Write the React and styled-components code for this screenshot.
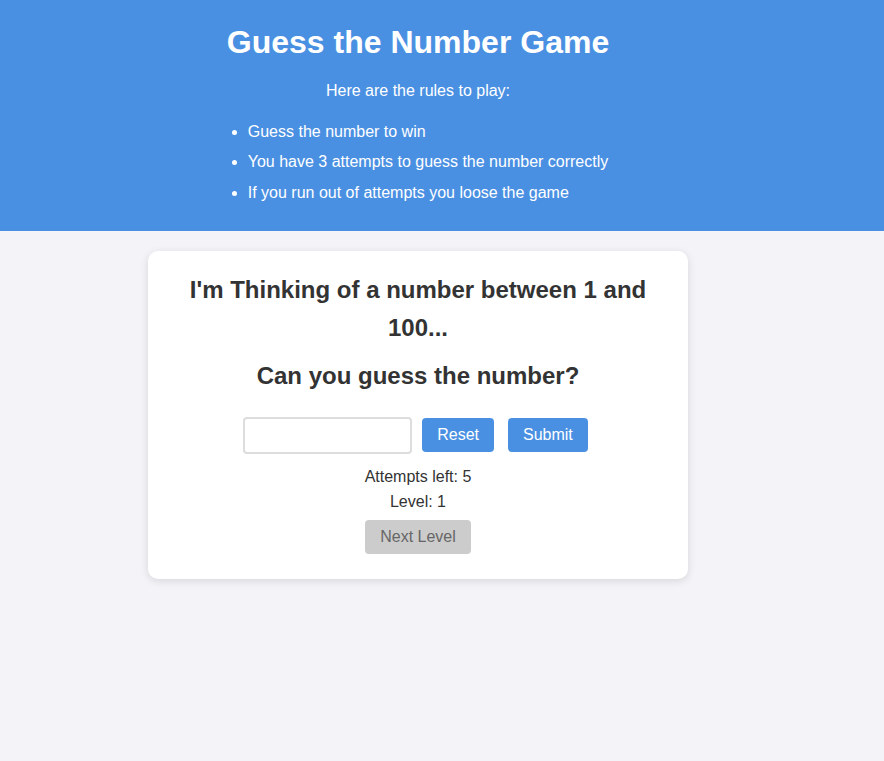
import { useState } from "react";
import styled, { createGlobalStyle } from "styled-components";

const GlobalStyle = createGlobalStyle`
  body {
    margin: 0;
    background-color: #f4f4f8;
    font-family: "Liberation Sans", Arial, sans-serif;
    line-height: 1.6;
    color: #333;
  }
`;

const App = () => {
  const [guess, setGuess] = useState("");

  return (
    <Page>
      <GlobalStyle />
      <Header>
        <Inner>
          <Title>Guess the Number Game</Title>
          <Intro>Here are the rules to play:</Intro>
          <Rules>
            <li>Guess the number to win</li>
            <li>You have 3 attempts to guess the number correctly</li>
            <li>If you run out of attempts you loose the game</li>
          </Rules>
        </Inner>
      </Header>

      <Main>
        <Card>
          <Heading>I'm Thinking of a number between 1 and 100...</Heading>
          <Heading>Can you guess the number?</Heading>
          <Controls>
            <GuessInput
              type="text"
              value={guess}
              onChange={(e) => setGuess(e.target.value)}
            />
            <Button onClick={() => setGuess("")}>Reset</Button>
            <Button>Submit</Button>
          </Controls>
          <Info>Attempts left: 5</Info>
          <Info>Level: 1</Info>
          <Button disabled>Next Level</Button>
        </Card>
      </Main>
    </Page>
  );
};
export default App;

const Page = styled.div`
  min-height: 100vh;
`;

const Header = styled.header`
  background-color: #4a90e2;
  color: #fff;
  padding: 17px 0 20px;
`;

const Inner = styled.div`
  max-width: 836px;
  display: flex;
  flex-direction: column;
  align-items: center;
`;

const Title = styled.h1`
  margin: 0;
  font-size: 32px;
  font-weight: 700;
`;

const Intro = styled.p`
  margin: 10px 0 0;
  font-size: 16px;
`;

const Rules = styled.ul`
  margin: 15px 20px 0 0;
  padding-left: 40px;
  font-size: 16px;

  li {
    margin-bottom: 5px;
  }
`;

const Main = styled.main`
  max-width: 836px;
  display: flex;
  justify-content: center;
  padding-top: 20px;
`;

const Card = styled.div`
  width: 540px;
  box-sizing: border-box;
  background: #fff;
  border-radius: 10px;
  box-shadow: 0 2px 8px rgba(0, 0, 0, 0.12);
  padding: 20px 20px 25px;
  display: flex;
  flex-direction: column;
  align-items: center;
  text-align: center;
`;

const Heading = styled.h2`
  margin: 0 0 10px;
  font-size: 24px;
  font-weight: 700;
  color: #333;
`;

const Controls = styled.div`
  display: flex;
  align-items: center;
  margin: 11px 0 10px;
  padding-right: 5px;
`;

const GuessInput = styled.input`
  width: 169px;
  height: 37px;
  box-sizing: border-box;
  border: 2px solid #ddd;
  border-radius: 4px;
  padding: 6px 10px;
  font-size: 16px;
  font-family: inherit;
  margin-right: 10px;
  outline: none;
`;

const Button = styled.button`
  height: 34px;
  padding: 0 15px;
  border: none;
  border-radius: 4px;
  font-size: 16px;
  font-family: inherit;
  background-color: #4a90e2;
  color: #fff;
  cursor: pointer;

  & + & {
    margin-left: 14px;
  }

  &:disabled {
    background-color: #ccc;
    color: #666;
    cursor: not-allowed;
    margin-top: 6px;
  }
`;

const Info = styled.p`
  margin: 0;
  font-size: 16px;
  line-height: 25px;
`;
